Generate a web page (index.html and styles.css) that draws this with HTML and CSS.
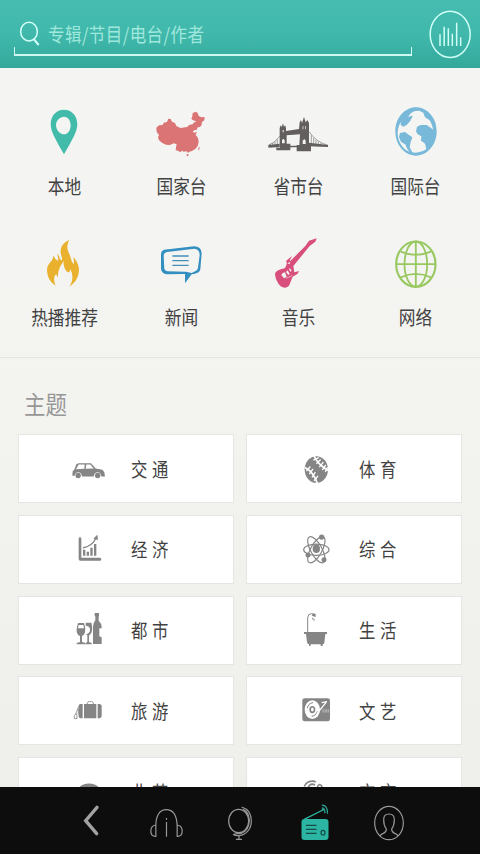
FILE: index.html
```html
<!DOCTYPE html>
<html lang="zh-CN">
<head>
<meta charset="utf-8">
<title>电台</title>
<link rel="stylesheet" href="styles.css">
</head>
<body>
<div class="app">
  <header class="header">
    <div class="search">
      <div class="search-row">
        <svg class="search-icon" viewBox="54 57 69 84"><ellipse cx="87" cy="95" rx="25" ry="28"/><path d="M102 118L116 135" stroke-width="6"/></svg>
        <span class="placeholder">专辑/节目/电台/作者</span>
      </div>
      <div class="bracket"></div>
    </div>
    <svg class="eq" viewBox="564 27 132 153"><ellipse cx="630.500" cy="103" rx="60" ry="69.500"/><path d="M600 103V138M612.500 80V138M625 85V138M637 101V138M650 68V138M662 112V138"/></svg>
  </header>

  <section class="categories">
    <div class="cat"><svg viewBox="35 16 198 180" fill="#43bbaa"><path fill-rule="evenodd" d="M131 45C107 45 91 64 91 89C91 111 108 139 131 179C154 139 171 111 171 89C171 64 155 45 131 45ZM131 66C143 66 151 78 151 91C151 106 143 119 131 119C119 119 107 106 107 91C107 78 119 66 131 66Z"/></svg><span class="label">本地</span></div>
    <div class="cat"><svg viewBox="386 16 198 180" fill="#db7474"><path d="M408 99L416 92L427 91L430 84L440 82L444 72L451 73L455 81L464 85L468 94L480 100L501 97L506 91L517 89L520 84L528 80L518 77L513 72L516 65L517 55L526 51L532 55L535 64L543 68L553 67L552 77L545 82L543 93L536 98L532 98L529 106L523 106L517 111L523 114L530 111L526 120L533 130L535 141L532 154L525 163L516 168L506 172L503 175L499 170L490 171L485 168L480 173L473 168L466 167L467 158L469 149L460 146L449 151L437 150L426 145L416 137L413 128L416 121L409 112Z"/><path d="M534 159L538 156L537 164L534 168ZM499 179L505 178L503 185L499 184Z"/></svg><span class="label">国家台</span></div>
    <div class="cat"><svg viewBox="47 16 198 180" fill="#625f5e"><path fill-rule="evenodd" d="M88 160V100L91 92L94 97L98 86L101 96L105 92L107 101V109L146 103L148 83L152 76L155 85L161 67L166 83L171 76L176 85V148H182V170H139V151H147L149 119L109 122V147H120V167H78V158ZM95 137V146H103V137L99 132ZM157 138V148H166V138L162 133ZM97 106V113H100V106ZM157 94V104H159V94ZM165 94V104H167V94Z"/><path d="M54 151L88 147V157L54 159ZM175 144L233 151V157L175 155ZM105 153H150V158H105Z"/><path d="M55 151Q74 145 89 124M176 111Q197 142 233 152M61 149V156M67 145V156M74 141V156M81 134V156M183 122V152M190 130V153M197 136V154M204 141V155M212 145V155M221 149V155" stroke="#625f5e" stroke-width="1.700" fill="none"/></svg><span class="label">省市台</span></div>
    <div class="cat"><svg viewBox="398 16 198 180" fill="#78b9da"><path fill-rule="evenodd" d="M497 38C531 38 559 70 559 110C559 151 531 183 497 183C463 183 435 151 435 110C435 70 463 38 497 38ZM452 81C443 95 440 111 443 127C448 149 462 166 477 171C473 164 467 158 466 150L452 141L446 127L449 115L464 112L476 121L486 128L481 142L478 158L486 173C500 176 518 171 528 163L524 147L516 140L515 125L502 119L497 110L500 96L511 91L529 91L541 99L548 105C547 94 543 84 537 76L524 68L519 54L507 48L494 49L482 55L473 66L488 63L479 80L469 91L459 96L451 91Z"/><path d="M504 97L520 92L532 98L533 113L527 125L519 143L512 138L513 125L501 115ZM542 118L549 111L545 131L537 143L534 137Z"/></svg><span class="label">国际台</span></div>
    <div class="cat"><svg viewBox="35 4 198 180" fill="#e9b12e"><path d="M147 30C135 37 123 44 121 62C119 75 128 84 124 92C119 92 117 79 111 71L114 91C111 96 104 88 99 77C100 95 80 101 80 121C81 144 91 158 106 168C100 153 99 141 108 133C109 137 109 141 113 142C113 117 122 107 130 94C128 112 137 128 147 128L150 119C160 139 157 155 147 171C166 159 175 142 176 122C176 108 171 96 160 82L161 103C151 97 153 81 145 69C139 57 140 43 147 30Z"/></svg><span class="label">热播推荐</span></div>
    <div class="cat"><svg viewBox="386 4 198 180" fill="none"><path fill="#348fc1" fill-rule="evenodd" d="M431 60L521 50Q543 50 544 71L540 119Q537 130 524 132L514 134L494 161L494 133L439 134Q425 132 422 119V75Q422 63 431 60ZM440 67Q431 69 430 78L432 117Q434 124 441 125L497 126L514 130L524 125Q532 123 533 114L538 76Q538 60 523 57Z"/><path stroke="#438fba" stroke-width="4" d="M456 79H505M456 93H505M456 107H505"/></svg><span class="label">新闻</span></div>
    <div class="cat"><svg viewBox="47 4 198 180" fill="#d84e7c"><path fill-rule="evenodd" d="M111 103L165 49L176 33L199 26L195 36L178 49L129 109L132 128L146 124L142 132L127 141L116 168Q105 179 91 170Q75 153 74 132Q76 122 103 116Q113 101 107 94L126 78Q116 91 119 102ZM97 130L93 136L101 146L109 141L104 128ZM107 127L114 136L118 133L112 122ZM116 118L120 126L124 123L119 116Z"/><path d="M106 146L126 138" stroke="#f6d4df" stroke-width="2"/></svg><span class="label">音乐</span></div>
    <div class="cat"><svg viewBox="398 4 198 180" fill="none" stroke="#99c862" stroke-width="6.500"><ellipse cx="496.500" cy="103.500" rx="59" ry="68"/><ellipse cx="496.500" cy="103.500" rx="34" ry="68" stroke-width="5.500"/><path d="M496.500 35V171M437 103.500H556M451 66Q496 85 542 66M451 143Q496 122 542 143" stroke-width="5.500"/></svg><span class="label">网络</span></div>
  </section>

  <main class="topics">
    <h2 class="title">主题</h2>
    <div class="grid">
      <div class="card"><svg viewBox="198 283.500 132 144"><path fill-rule="evenodd" d="M217 376L218 362L223 357L229 341L236 338L273 338L287 354L307 358L313 365L315 378H304Q302 365 293 365Q283 365 281 378H246Q245 365 234 365Q226 365 224 376ZM228 356L253 355L254 342H236ZM257 355L281 354L271 342H259Z"/><circle cx="234.500" cy="375" r="8"/><circle cx="293" cy="375" r="8"/></svg><span class="name">交通</span></div>
      <div class="card"><svg viewBox="162 58.500 132 144"><ellipse cx="229" cy="132" rx="35" ry="40"/><path d="M222 91Q232 115 264 135M195 126Q221 140 232 173" stroke="#fff" stroke-width="5" fill="none"/><path d="M220 104L237 96M229 115L242 102M238 125L250 110M247 134L257 118M256 139L263 125M199 137L211 123M208 146L219 130M216 156L226 140M222 166L234 151" stroke="#fff" stroke-width="4"/></svg><span class="name">体育</span></div>
      <div class="card"><svg viewBox="198 45.750 132 144"><path d="M236 85Q240 80 244 85V144H299Q304 145 304 149Q304 153 299 153H241Q236 153 236 147ZM249 120H256V138H249ZM260 126H267V138H260ZM271 114H278V138H271ZM282 103H289V138H282Z"/><path d="M249 114Q275 110 287 87" fill="none" stroke="#858585" stroke-width="4"/><path d="M280 87L292 75L294 91Z"/></svg><span class="name">经济</span></div>
      <div class="card"><svg viewBox="162 300.750 132 144"><g fill="none" stroke="#858585" stroke-width="3.500"><ellipse cx="229" cy="375" rx="38" ry="17"/><ellipse cx="229" cy="375" rx="44" ry="17" transform="rotate(61 229 375)"/><ellipse cx="229" cy="375" rx="44" ry="17" transform="rotate(119 229 375)"/></g><ellipse cx="229" cy="372" rx="11" ry="13"/><circle cx="245" cy="337" r="8"/><circle cx="204" cy="391" r="7.500"/><circle cx="252" cy="405" r="7.500"/></svg><span class="name">综合</span></div>
      <div class="card"><svg viewBox="198 288 132 144"><path fill-rule="evenodd" d="M234 339H252Q258 354 255 367Q253 375 246 378V396L256 399V403H230V399L240 396V378Q232 375 230 366Q229 354 234 339ZM236 345L234 355H252L250 345ZM257 338H274Q279 356 274 369L267 377V396L275 399V403H257V399L262 396V376L258 373Q269 370 270 361Q271 348 257 347ZM284 309H297V319H296V332Q305 340 305 351V355H298V379L305 382V402H279V350Q280 338 286 331V319H284Z"/></svg><span class="name">都市</span></div>
      <div class="card"><svg viewBox="162 48 132 144"><path d="M192 126H261V132H256L253 158Q252 163 246 163H208Q202 163 201 157L198 132H192ZM207 162H213L211 168H207ZM241 162H248V168H243ZM215 77Q217 70 227 72V81Z"/><path d="M203 126V83Q204 71 214 71L224 72M218 83V88M222 86V92" fill="none" stroke="#858585" stroke-width="3"/></svg><span class="name">生活</span></div>
      <div class="card"><svg viewBox="198 50.250 132 144"><path d="M236 106Q236 102 242 101H248V144H241Q236 143 236 139ZM252 101H289V144H252ZM293 101H299Q305 102 305 107V138Q304 143 299 144H293Z"/><path d="M262 102V97Q263 94 268 94H274Q280 94 281 102M236 109L228 129L223 137V145H231V136L228 129M235 116V133" fill="none" stroke="#858585" stroke-width="2.500"/></svg><span class="name">旅游</span></div>
      <div class="card"><svg viewBox="162 290.250 132 144"><rect x="187" y="324" width="83" height="69" rx="7"/><ellipse cx="217" cy="358" rx="23" ry="28" fill="#fff"/><ellipse cx="217" cy="358" rx="9" ry="11"/><ellipse cx="217" cy="358" rx="4" ry="6" fill="#fff"/><path d="M202 354Q205 339 219 337M215 378Q228 377 232 363" fill="none" stroke="#858585" stroke-width="3"/><path d="M260 334L231 370M245 337L261 334" stroke="#fff" stroke-width="4"/><path d="M249 357V367M255 357V367M260 357V367M265 357V367" stroke="#d8d8d8" stroke-width="2"/></svg><span class="name">文艺</span></div>
      <div class="card"><svg viewBox="198 292.500 132 144"><path d="M237 351Q247 339 267 339Q287 339 297 351L304 362H230Z"/></svg><span class="name">曲艺</span></div>
      <div class="card"><svg viewBox="162 532.500 132 144"><path d="M193 588Q199 573 215 572Q223 571 227 575M204 592Q208 582 217 581L225 583M233 592Q232 584 239 582Q246 584 246 592" fill="none" stroke="#858585" stroke-width="5"/></svg><span class="name">方言</span></div>
    </div>
  </main>

  <nav class="nav">
    <svg viewBox="162 351 223.500 201"><path d="M291 412L257 452L290 491" stroke="#a2a2a2" stroke-width="10" stroke-linecap="round"/></svg>
    <svg viewBox="385.500 351 223.500 201"><path d="M466 467C466 438 477 419 497 419C518 419 529 438 530 467M466 465V499Q451 500 451 483Q451 467 466 465ZM530 465V499Q545 500 545 483Q545 467 530 465ZM498 456V500M498 444V449"/></svg>
    <svg viewBox="-51 111 223.500 201"><ellipse cx="56" cy="213" rx="30" ry="35"/><path d="M65 171C85 177 94 194 94 213C94 238 78 255 57 257Q46 258 39 253M68 178Q88 186 88 212Q87 242 63 250L43 252M57 257V267M48 268H66"/></svg>
    <svg viewBox="172.500 111 223.500 201"><rect x="243" y="207" width="81" height="63" rx="9" fill="#2bb5a2" stroke="none"/><path d="M251 208L307 180" stroke="#2bb5a2" stroke-width="4"/><path d="M304 166Q321 164 321 191M304 174Q313 173 313 190" stroke="#279c8d" stroke-width="4"/><circle cx="307" cy="179" r="3" fill="#2bb5a2" stroke="none"/><path d="M256 226H288M256 238H288M256 250H288" stroke="#164d46"/><ellipse cx="307.500" cy="248" rx="6" ry="7" stroke="#164d46"/></svg>
    <svg viewBox="396 111 223.500 201"><ellipse cx="507" cy="219" rx="43" ry="50"/><path d="M480 258Q482 253 490 250Q499 247 499 237Q491 226 491 209Q491 192 507 192Q523 192 523 209Q523 226 515 237Q515 247 524 250Q532 253 534 258"/></svg>
  </nav>
</div>
</body>
</html>
```
FILE: styles.css
```css
* { box-sizing: border-box; }

body {
  margin: 0;
  overflow: hidden;
  font-family: "Noto Sans CJK SC", sans-serif;
  color: #424242;
}

svg { display: block; flex: none; }

.app {
  width: 480px;
  height: 854px;
  display: flex;
  flex-direction: column;
  background: linear-gradient(#f5f5f4, #f3f4f0 45%, #eeeeea);
}

.header {
  flex: none;
  height: 68px;
  display: flex;
  padding-left: 14px;
  background: linear-gradient(#46bcb0, #40b8ab 50%, #33a99b);
}

.search {
  width: 398px;
  padding-top: 19px;
}

.search-row {
  height: 28px;
  display: flex;
  align-items: center;
  padding-left: 4px;
}

.search-icon {
  width: 23px;
  height: 28px;
  fill: none;
  stroke: #d3fffa;
  stroke-width: 4.500;
}

/* Glyphs across the app are drawn slightly taller than wide. */
.placeholder,
.label,
.title,
.name {
  transform: scaleY(1.17);
  white-space: nowrap;
}

.placeholder {
  margin-left: 7px;
  margin-top: 2px;
  font-size: 16.500px;
  letter-spacing: 0.450px;
  line-height: 20px;
  color: #a0e8dd;
}

.bracket {
  height: 9px;
  border: solid #cff8f2;
  border-width: 0 1px 2px;
}

.eq {
  width: 44px;
  height: 51px;
  margin: 9px 0 0 16px;
  fill: none;
  stroke: #d0fff8;
  stroke-width: 4.500;
}

.categories {
  flex: none;
  height: 290px;
  display: grid;
  grid-template-columns: repeat(4, 117px);
  grid-auto-rows: 131px;
  padding: 32px 6px 0;
  border-bottom: 1px solid #e4e4e0;
}

.cat {
  display: flex;
  flex-direction: column;
  align-items: center;
}

.cat svg {
  width: 66px;
  height: 60px;
}

.label {
  margin-top: 15px;
  font-size: 16.700px;
  line-height: 22px;
}

.topics {
  flex: 1;
  min-height: 0;
  overflow: hidden;
  padding: 0 18px;
}

.title {
  margin: 31px 0 17px 6px;
  font-size: 21.500px;
  line-height: 28px;
  font-weight: 400;
  color: #979797;
}

.grid {
  display: grid;
  grid-template-columns: 216px 216px;
  grid-auto-rows: 69px;
  gap: 11.750px 12px;
}

.card {
  display: flex;
  align-items: center;
  padding-left: 47px;
  background: #fff;
  border: 1px solid #e5e5e3;
}

.card svg {
  width: 44px;
  height: 48px;
  fill: #858585;
}

.name {
  margin-left: 21px;
  font-size: 16.400px;
  letter-spacing: 4.600px;
  line-height: 22px;
}

.nav {
  flex: none;
  height: 67px;
  display: flex;
  padding-left: 54px;
  background: #0d0d0d;
}

.nav svg {
  width: 74.500px;
  height: 67px;
  fill: none;
  stroke: #989898;
  stroke-width: 3.600;
}
```
